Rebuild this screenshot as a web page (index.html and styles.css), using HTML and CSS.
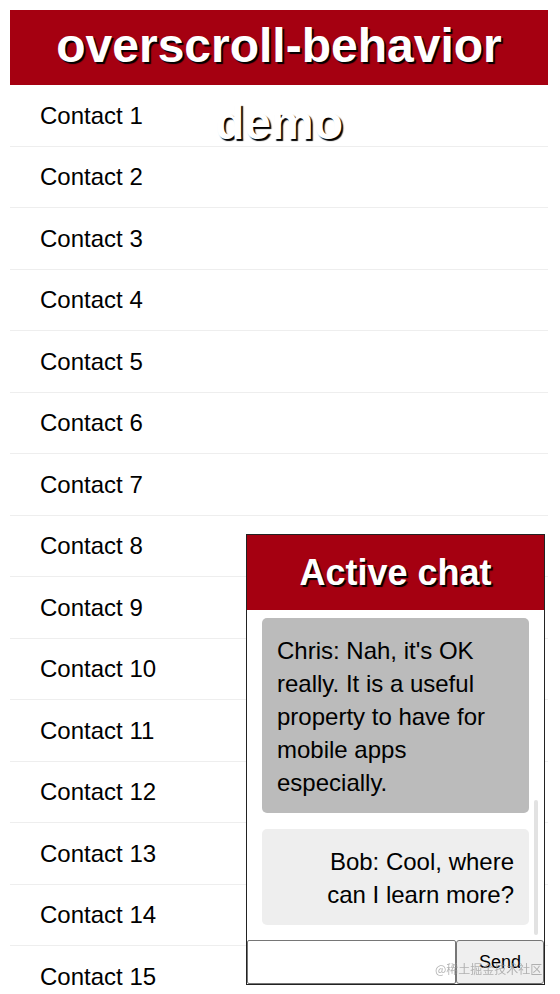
FILE: index.html
```html
<!DOCTYPE html>
<html lang="en">
<head>
<meta charset="UTF-8">
<meta name="viewport" content="width=device-width, initial-scale=1.0">
<title>overscroll-behavior demo</title>
<link rel="stylesheet" href="styles.css">
</head>
<body>
    <!-- Page header -->
    <header class="page-header">
        <h1>overscroll-behavior demo</h1>
    </header>

    <!-- Contact list -->
    <ul class="contacts">
        <li>Contact 1</li>
        <li>Contact 2</li>
        <li>Contact 3</li>
        <li>Contact 4</li>
        <li>Contact 5</li>
        <li>Contact 6</li>
        <li>Contact 7</li>
        <li>Contact 8</li>
        <li>Contact 9</li>
        <li>Contact 10</li>
        <li>Contact 11</li>
        <li>Contact 12</li>
        <li>Contact 13</li>
        <li>Contact 14</li>
        <li>Contact 15</li>
        <li>Contact 16</li>
        <li>Contact 17</li>
    </ul>

    <!-- Chat window, sits over the list -->
    <section class="chat">
        <h2>Active chat</h2>
        <div class="messages">
            <p class="msg them">Chris: Hello Bob, have you heard of overscroll-behavior?</p>
            <p class="msg me">Bob: No, what is it?</p>
            <p class="msg them">Chris: Nah, it's OK really. It is a useful property to have for mobile apps especially.</p>
            <p class="msg me">Bob: Cool, where can I learn more?</p>
            <div class="scroll-thumb"></div>
        </div>
        <form class="chat-form">
            <input type="text" class="chat-input">
            <button type="button" class="chat-send">Send</button>
        </form>
    </section>

    <div class="watermark">@稀土掘金技术社区</div>
</body>
</html>
```

FILE: styles.css
```css
/* General formatting */
html {
    overflow: hidden;
}

body {
    font-family: "Liberation Sans", Arial, sans-serif;
    margin: 0;
    padding: 10px 12px 0 10px;
    color: #000;
    background-color: #fff;
}

/* Red title bar */
.page-header {
    display: flow-root;
    height: 75px;
    background-color: #a50011;
}

.page-header h1 {
    margin: -3px 0 0;
    font-size: 48px;
    line-height: 77px;
    text-align: center;
    color: #fff;
    text-shadow: 2px 2px 1px #000;
}

/* Contact list */
.contacts {
    list-style: none;
    margin: 0;
    padding: 0;
}

.contacts li {
    padding: 19.5px 30px;
    font-size: 24px;
    line-height: 21.5px;
    border-bottom: 1px solid #eee;
}

/* Chat window */
.chat {
    position: fixed;
    left: 246px;
    top: 534px;
    width: 297px;
    height: 449px;
    border: 1px solid #222;
    background-color: #fff;
    display: flex;
    flex-direction: column;
}

.chat h2 {
    margin: 0;
    height: 75px;
    background-color: #a50011;
    color: #fff;
    font-size: 36px;
    line-height: 75px;
    text-align: center;
    text-shadow: 2px 2px 1px #000;
}

.messages {
    position: relative;
    height: 330px;
    overflow: hidden;
    display: flex;
    flex-direction: column;
    justify-content: flex-end;
    gap: 16px;
    padding: 0 15px 15px;
    box-sizing: border-box;
}

.msg {
    flex: none;
    margin: 0;
    padding: 16px 15px 14px;
    border-radius: 5px;
    font-size: 24px;
    line-height: 33px;
}

.msg.them {
    background-color: #bbb;
}

.msg.me {
    background-color: #eee;
    text-align: right;
    padding-left: 40px;
}

.scroll-thumb {
    position: absolute;
    right: 6px;
    bottom: 5px;
    width: 4px;
    height: 135px;
    border-radius: 2px;
    background-color: #e2e2e2;
}

/* Message form */
.chat-form {
    display: flex;
    height: 44px;
    margin: 0;
}

.chat-input {
    width: 209px;
    margin: 0;
    border: 1px solid #767676;
    border-radius: 2px;
    box-sizing: border-box;
    font-size: 18px;
}

.chat-send {
    width: 88px;
    margin: 0;
    border: 1px solid #767676;
    border-radius: 3px;
    background-color: #efefef;
    font-family: "Liberation Sans", Arial, sans-serif;
    font-size: 18px;
    color: #000;
}

.watermark {
    position: fixed;
    left: 435px;
    top: 961px;
    font-family: "Noto Sans CJK SC", sans-serif;
    font-size: 12px;
    line-height: 16px;
    color: rgba(150, 150, 150, 0.7);
}
```
